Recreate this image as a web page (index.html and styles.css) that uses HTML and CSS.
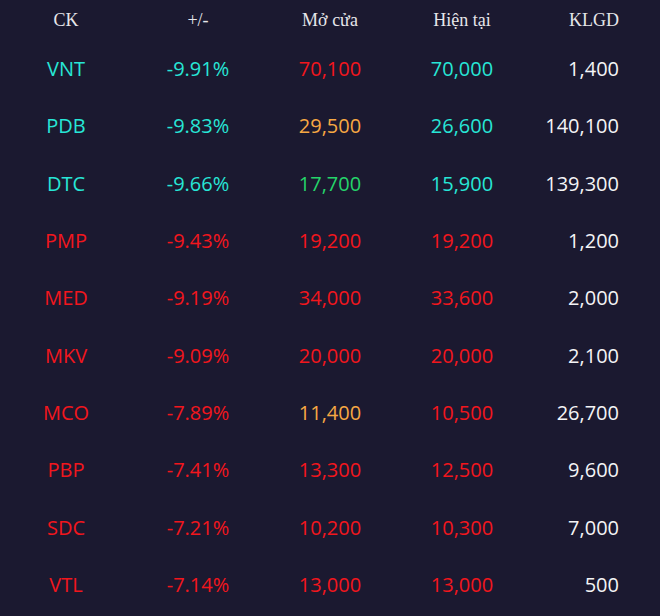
FILE: index.html
```html
<!DOCTYPE html>
<html lang="vi">
<head>
<meta charset="utf-8">
<link rel="stylesheet" href="styles.css">
</head>
<body>
<div class="board">
  <div class="row head">
    <div class="c">CK</div><div class="c">+/-</div><div class="c">Mở cửa</div><div class="c">Hiện tại</div><div class="c r">KLGD</div>
  </div>
  <div class="row"><div class="c cy">VNT</div><div class="c cy">-9.91%</div><div class="c rd">70,100</div><div class="c cy">70,000</div><div class="c r wh">1,400</div></div>
  <div class="row"><div class="c cy">PDB</div><div class="c cy">-9.83%</div><div class="c or">29,500</div><div class="c cy">26,600</div><div class="c r wh">140,100</div></div>
  <div class="row"><div class="c cy">DTC</div><div class="c cy">-9.66%</div><div class="c gr">17,700</div><div class="c cy">15,900</div><div class="c r wh">139,300</div></div>
  <div class="row"><div class="c rd">PMP</div><div class="c rd">-9.43%</div><div class="c rd">19,200</div><div class="c rd">19,200</div><div class="c r wh">1,200</div></div>
  <div class="row"><div class="c rd">MED</div><div class="c rd">-9.19%</div><div class="c rd">34,000</div><div class="c rd">33,600</div><div class="c r wh">2,000</div></div>
  <div class="row"><div class="c rd">MKV</div><div class="c rd">-9.09%</div><div class="c rd">20,000</div><div class="c rd">20,000</div><div class="c r wh">2,100</div></div>
  <div class="row"><div class="c rd">MCO</div><div class="c rd">-7.89%</div><div class="c or">11,400</div><div class="c rd">10,500</div><div class="c r wh">26,700</div></div>
  <div class="row"><div class="c rd">PBP</div><div class="c rd">-7.41%</div><div class="c rd">13,300</div><div class="c rd">12,500</div><div class="c r wh">9,600</div></div>
  <div class="row"><div class="c rd">SDC</div><div class="c rd">-7.21%</div><div class="c rd">10,200</div><div class="c rd">10,300</div><div class="c r wh">7,000</div></div>
  <div class="row"><div class="c rd">VTL</div><div class="c rd">-7.14%</div><div class="c rd">13,000</div><div class="c rd">13,000</div><div class="c r wh">500</div></div>
</div>
</body>
</html>
```
FILE: styles.css
```css
html, body {
  margin: 0;
  padding: 0;
  background: #1b1930;
}
.board {
  width: 660px;
  height: 616px;
  background: #1b1930;
  font-family: "Open Sans", "Noto Sans", sans-serif;
  font-size: 20px;
}
.row {
  display: grid;
  grid-template-columns: 132px 132px 132px 132px 132px;
  height: 57.3px;
  align-items: center;
}
.row.head {
  height: 40px;
  font-family: "Liberation Serif", serif;
  font-size: 18px;
  color: #e6e6ea;
}
.c {
  text-align: center;
  white-space: nowrap;
}
.c.r {
  text-align: right;
  padding-right: 41px;
}
.cy { color: #27e6d6; }
.rd { color: #f2161d; }
.or { color: #f7a843; }
.gr { color: #25d46a; }
.wh { color: #f4f4f6; }
```
